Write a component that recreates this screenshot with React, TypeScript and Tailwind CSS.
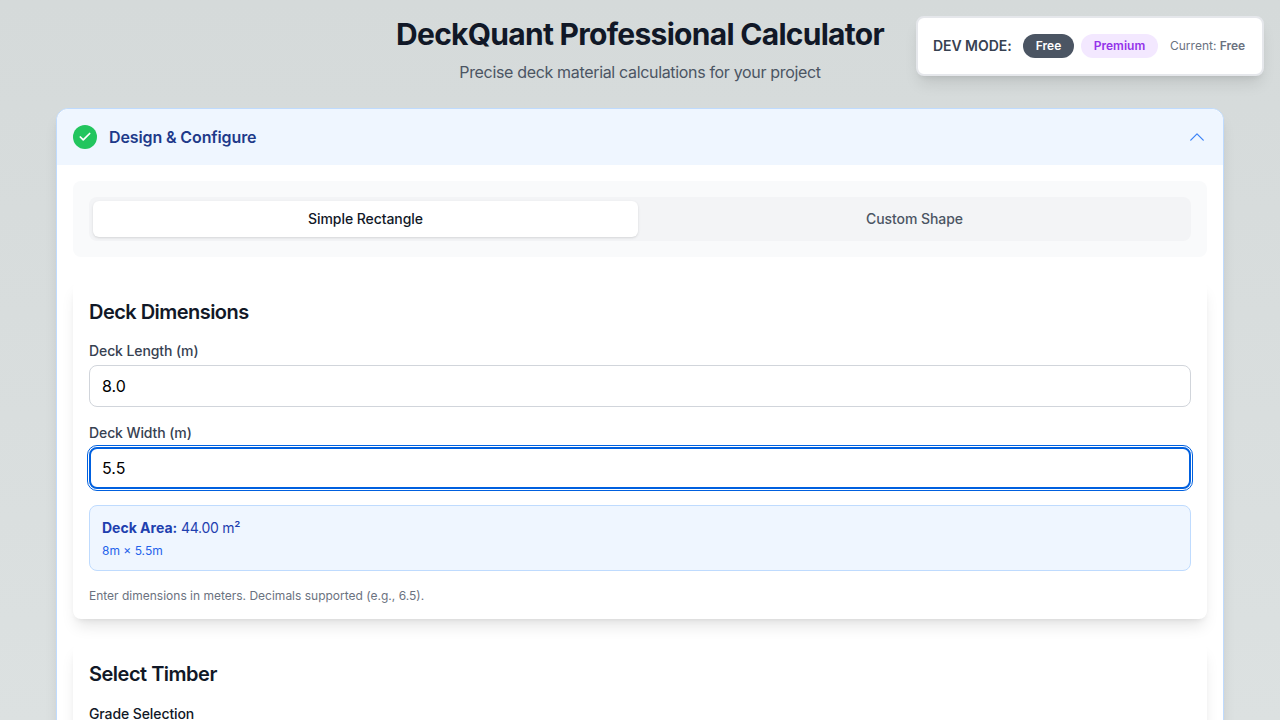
import { Check } from "lucide-react";

function Field({ label, value, focused }: { label: string; value: string; focused?: boolean }) {
  return (
    <div>
      <label className="block text-sm font-medium tracking-[-0.1px] text-[#374151] leading-5 mb-1">{label}</label>
      <input
        readOnly
        value={value}
        className={
          focused
            ? "block w-full h-[42px] px-[11px] rounded-lg border-2 border-[#0060df] outline outline-1 outline-offset-1 outline-[#0060df] text-base text-black bg-white"
            : "block w-full h-[42px] px-3 rounded-lg border border-[#d1d5db] text-base text-black bg-white"
        }
      />
    </div>
  );
}

export default function App() {
  return (
    <div
      className="relative h-screen overflow-hidden bg-gradient-to-b from-[#d5dada] to-[#dce1e1] text-[#111827]"
      style={{ fontFamily: "Inter, 'Noto Sans', sans-serif" }}
    >
      <div className="absolute top-4 right-4 w-[348px] h-[60px] flex items-center pl-[15px] bg-white border-2 border-[#e5e7eb] rounded-lg shadow-lg z-10">
        <span className="text-sm font-semibold tracking-[-0.05px] text-[#374151] w-[78px] whitespace-nowrap">DEV MODE:</span>
        <button className="ml-3 w-[51px] h-6 rounded-full bg-[#4b5563] text-white text-xs font-semibold">Free</button>
        <button className="ml-[7px] w-[77px] h-6 rounded-full bg-[#f3e8ff] text-[#9333ea] text-xs font-semibold">Premium</button>
        <span className="ml-3 text-xs text-[#6b7280] whitespace-nowrap">
          Current: <span className="font-semibold">Free</span>
        </span>
      </div>

      <header className="pt-4 text-center">
        <h1 className="text-3xl font-bold leading-9 tracking-[-0.72px] text-[#111827]">DeckQuant Professional Calculator</h1>
        <p className="mt-2 text-base leading-6 tracking-[-0.33px] text-[#4b5563]">Precise deck material calculations for your project</p>
      </header>

      <main className="mx-14 mt-6 bg-white rounded-xl border border-[#bfdbfe] shadow-lg">
        <div className="h-[56px] px-4 flex items-center justify-between bg-[#eff6ff] rounded-t-xl">
          <div className="flex items-center gap-3">
            <span className="w-6 h-6 rounded-full bg-[#22c55e] flex items-center justify-center text-white">
              <Check size={14} strokeWidth={3} />
            </span>
            <span className="text-base font-semibold tracking-[-0.12px] text-[#1e3a8a]">Design &amp; Configure</span>
          </div>
          <svg className="w-5 h-5 text-[#3b82f6]" viewBox="0 0 24 24" fill="none" stroke="currentColor" strokeWidth={1.5} strokeLinecap="round" strokeLinejoin="round">
            <path d="M4.5 15.75l7.5-7.5 7.5 7.5" />
          </svg>
        </div>

        <div className="p-4 flex flex-col gap-6">
          <div className="p-4 bg-[#f9fafb] rounded-lg">
            <div className="p-1 flex gap-1 bg-[#f3f4f6] rounded-lg">
              <button className="flex-1 h-9 rounded-md bg-white shadow-sm text-sm font-medium tracking-[-0.07px] text-[#111827]">Simple Rectangle</button>
              <button className="flex-1 h-9 rounded-md text-sm font-medium tracking-[-0.07px] text-[#4b5563]">Custom Shape</button>
            </div>
          </div>

          <section className="px-4 pt-[17px] pb-[15px] bg-white rounded-lg shadow-lg">
            <h2 className="text-xl font-semibold leading-7 tracking-[-0.54px] text-[#111827] mb-[15px]">Deck Dimensions</h2>
            <div className="flex flex-col gap-4">
              <Field label="Deck Length (m)" value="8.0" />
              <Field label="Deck Width (m)" value="5.5" focused />
              <div className="h-[66px] px-3 pt-3 bg-[#eff6ff] border border-[#bfdbfe] rounded-lg">
                <p className="text-sm leading-5 tracking-[-0.25px] text-[#1e40af]">
                  <span className="font-bold tracking-normal">Deck Area:</span> 44.00 m²
                </p>
                <p className="mt-[5px] text-xs leading-4 text-[#2563eb]">8m × 5.5m</p>
              </div>
            </div>
            <p className="mt-[17px] text-xs leading-4 text-[#6b7280]">Enter dimensions in meters. Decimals supported (e.g., 6.5).</p>
          </section>

          <section className="px-4 pt-[17px] pb-4 bg-white rounded-lg shadow-lg">
            <h2 className="text-xl font-semibold leading-7 tracking-[-0.5px] text-[#111827] mb-4">Select Timber</h2>
            <label className="block text-sm font-medium leading-5 tracking-[-0.1px] text-[#111827]">Grade Selection</label>
          </section>
        </div>
      </main>
    </div>
  );
}
